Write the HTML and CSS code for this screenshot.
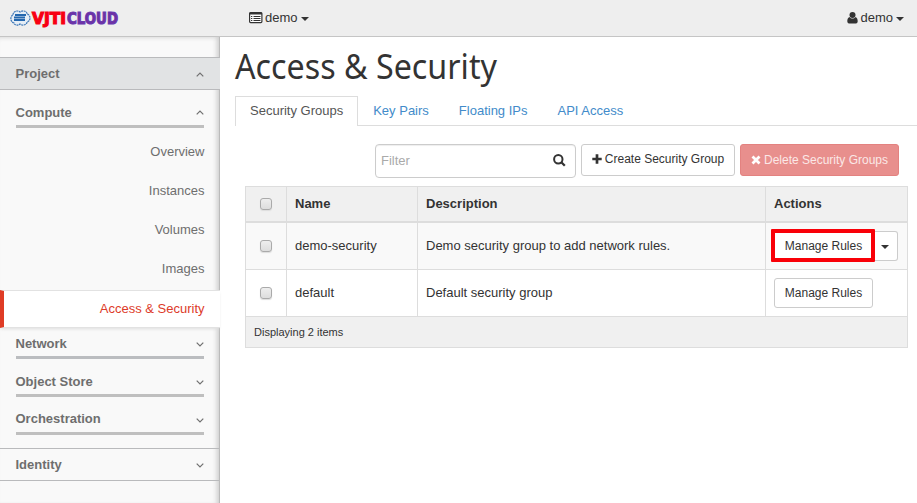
FILE: index.html
```html
<!DOCTYPE html>
<html lang="en">
<head>
<meta charset="utf-8">
<title>Access &amp; Security</title>
<link rel="stylesheet" href="styles.css">
</head>
<body>
<header class="topbar">
  <svg class="logo" width="112" height="24" viewBox="0 -2 112 24">
    <path d="M4 15C0 14 0 8 3 7C3 3 8 2 10 4C13 2 17 3 17 6C21 7 21 13 17 14C17 17 12 18 10 16C8 18 4 17 4 15Z" fill="#e5edf5" stroke="#3e78b8" stroke-width="1.2" stroke-dasharray="2 .6"/>
    <path d="M5 7H16M4 9.500H15M4 12H15" stroke="#2467ae" stroke-width="1.8"/>
    <text class="logo-red" x="22" y="15.500" textLength="34" lengthAdjust="spacingAndGlyphs">VJTI</text>
    <text class="logo-purple" x="57" y="15.500" textLength="51" lengthAdjust="spacingAndGlyphs">CLOUD</text>
  </svg>
  <div class="menu project-menu">
    <svg width="14" height="12" viewBox="0 0 14 12"><rect x=".6" y=".6" width="12.300" height="10" rx="1" fill="#fff" stroke="#333" stroke-width="1.200"/><path d="M.5 1.500H13" stroke="#333" stroke-width="2"/><path d="M2 4.500H3.300M2 6.500H3.300M2 8.500H3.300M4.500 4.500H11.500M4.500 6.500H11.500M4.500 8.500H11.500" stroke="#333"/></svg>
    <span>demo</span><i class="caret"></i>
  </div>
  <div class="menu user-menu">
    <svg width="11" height="12" viewBox="0 0 11 12"><circle cx="5.500" cy="3" r="3" fill="#333"/><path d="M2.500 5C4.200 7 6.800 7 8.500 5C10.300 5.500 10.700 7.500 10.700 9.500Q10.500 11.500 9 11.500H2Q.5 11.500.3 9.500C.3 7.500.7 5.500 2.500 5Z" fill="#333"/></svg>
    <span>demo</span><i class="caret"></i>
  </div>
</header>
<div class="layout">
  <nav class="sidebar">
    <div class="section open"><span>Project</span><svg class="chev" viewBox="0 0 8 5"><path d="M.7 4.300L4 1L7.300 4.300"/></svg></div>
    <div class="group compute"><span>Compute</span><svg class="chev" viewBox="0 0 8 5"><path d="M.7 4.300L4 1L7.300 4.300"/></svg></div>
    <a class="item">Overview</a>
    <a class="item">Instances</a>
    <a class="item">Volumes</a>
    <a class="item">Images</a>
    <a class="item active">Access &amp; Security</a>
    <div class="group network"><span>Network</span><svg class="chev" viewBox="0 0 8 5"><path d="M.7 .7L4 4L7.300 .7"/></svg></div>
    <div class="group"><span>Object Store</span><svg class="chev" viewBox="0 0 8 5"><path d="M.7 .7L4 4L7.300 .7"/></svg></div>
    <div class="group orchestration"><span>Orchestration</span><svg class="chev" viewBox="0 0 8 5"><path d="M.7 .7L4 4L7.300 .7"/></svg></div>
    <div class="section identity"><span>Identity</span><svg class="chev" viewBox="0 0 8 5"><path d="M.7 .7L4 4L7.300 .7"/></svg></div>
  </nav>
  <main class="content">
    <h1 class="title"><svg width="280" height="56"><text x="0" y="42" textLength="262" lengthAdjust="spacingAndGlyphs">Access &amp; Security</text></svg></h1>
    <div class="tabs">
      <a class="tab current">Security Groups</a>
      <a class="tab">Key Pairs</a>
      <a class="tab">Floating IPs</a>
      <a class="tab">API Access</a>
    </div>
    <div class="toolbar">
      <div class="filter"><span>Filter</span><svg width="13" height="13" viewBox="0 0 13 13" fill="none" stroke="#333"><circle cx="5.300" cy="5.300" r="4.200" stroke-width="2"/><path d="M8.300 8.300L11.800 11.800" stroke-width="2.300"/></svg></div>
      <button class="btn create"><svg width="10" height="10" viewBox="0 0 10 10"><path d="M5 .3V9.700M.3 5H9.700" stroke="#333" stroke-width="2.700"/></svg>Create Security Group</button>
      <button class="btn delete"><svg width="10" height="10" viewBox="0 0 10 10"><path d="M1.500 1.500L8.500 8.500M8.500 1.500L1.500 8.500" stroke="#fff" stroke-width="2.800"/></svg>Delete Security Groups</button>
    </div>
    <div class="table">
      <div class="row head"><div class="cell"><i class="check"></i></div><div class="cell">Name</div><div class="cell">Description</div><div class="cell">Actions</div></div>
      <div class="row striped"><div class="cell"><i class="check"></i></div><div class="cell">demo-security</div><div class="cell">Demo security group to add network rules.</div><div class="cell"><button class="btn small marked">Manage Rules</button><button class="btn toggle"><i class="caret"></i></button></div></div>
      <div class="row"><div class="cell"><i class="check"></i></div><div class="cell">default</div><div class="cell">Default security group</div><div class="cell"><button class="btn small">Manage Rules</button></div></div>
      <div class="foot">Displaying 2 items</div>
    </div>
  </main>
</div>
</body>
</html>
```
FILE: styles.css
```css
* { box-sizing: border-box; }
body { margin: 0; height: 503px; overflow: hidden; background: #fff; color: #333; font: 13px/18px "Liberation Sans", Arial, sans-serif; }
svg { display: block; flex: none; overflow: visible; }
.topbar { height: 37px; display: flex; align-items: center; background: #eee; border-bottom: 1px solid #c5c5c5; padding: 0 13px 1px 10px; }
.logo { font: 900 16px "DejaVu Sans", sans-serif; }
.logo-red { fill: #f80012; stroke: #f80012; stroke-width: 1.2px; }
.logo-purple { fill: #7030a0; stroke: #6838b0; stroke-width: 1.2px; }
.menu { display: flex; align-items: center; }
.menu span { margin: 0 3px 0 2px; }
.project-menu { margin-left: 127px; }
.user-menu { margin-left: auto; }
.caret { display: block; border: 4px solid transparent; border-top-color: #333; border-bottom: 0; margin-top: 2px; }
.layout { display: flex; height: 466px; }
.sidebar { width: 220px; flex: none; padding-top: 20px; background: #f9f9f9; border-right: 1px solid #bbb; box-shadow: inset -5px 0 5px -3px #ccc, inset 0 4px 4px -3px #ddd; color: #6e6e6e; }
.section { width: 220px; height: 33px; padding: 0 16px 0 15.5px; display: flex; align-items: center; justify-content: space-between; font-weight: bold; border-top: 1px solid #b9babc; border-bottom: 1px solid #b9babc; }
.open { background: #e1e3e4; }
.identity { margin-top: 13px; width: 219px; padding-right: 15px; }
.chev { width: 8px; height: 5px; fill: none; stroke: #707070; stroke-width: 1.2; margin-top: 2px; }
.group { height: 38px; margin: 0 15px 0 16px; border-bottom: 3px solid #bfbfbf; display: flex; align-items: center; justify-content: space-between; font-weight: bold; padding-top: 10px; }
.group span { margin-left: -.5px; }
.group .chev { margin-top: 1px; }
.compute { margin-bottom: 4px; }
.compute .chev { margin-top: 0; }
.network { height: 31px; padding-top: 3px; border-color: #bbbdc0; }
.orchestration { padding-top: 9px; }
.orchestration .chev { margin-top: 3px; }
.item { display: flex; height: 39px; padding-right: 14.5px; align-items: center; justify-content: flex-end; }
.active { width: 220px; height: 38px; padding-right: 15.5px; margin-top: 2px; border-top: 1px solid #e2e2e2; border-bottom: 1px solid #e2e2e2; border-left: 4px solid #df3c25; background: #fff; color: #dd3b29; box-shadow: 0 2px 3px -1px #ddd; }
.content { flex: 1; min-width: 0; }
.title { margin: 0; height: 59px; padding-left: 15px; font: 34px "Noto Sans", sans-serif; }
.title text { fill: #333; }
.tabs { margin-left: 15px; display: flex; height: 30px; border-bottom: 1px solid #ddd; }
.tab { height: 29px; padding: 0 15px; line-height: 29px; color: #428bca; }
.current { height: 30px; margin-bottom: -1px; padding: 0 14px; border: 1px solid #ddd; border-bottom: 0; background: #fff; color: #555; line-height: 28px; }
.toolbar { display: flex; margin: 18px 18px 8px 155px; height: 34px; }
.filter { width: 201px; height: 34px; padding: 0 9px 0 5px; border: 1px solid #ccc; border-radius: 4px; display: flex; align-items: center; justify-content: space-between; color: #aaa; box-shadow: inset 0 1px 1px #eee; }
.filter svg { margin-top: -2px; }
.btn { height: 32px; display: flex; align-items: center; justify-content: center; border: 1px solid #ccc; border-radius: 3px; background: #fff; color: #333; font: 12px "Liberation Sans", Arial, sans-serif; padding: 0; white-space: nowrap; gap: 3px; }
.create { width: 154px; margin-left: 5px; padding-bottom: 2px; }
.delete { width: 159px; margin-left: 5px; background: #e88f8d; border-color: #e38280; color: #fbe8e7; }
.table { width: 663px; height: 162px; margin-left: 25px; border: 1px solid #ddd; }
.row { display: grid; grid-template-columns: 40px 131px 348px 142px; height: 47px; border-bottom: 1px solid #ddd; }
.head { height: 36px; border-bottom-width: 2px; background: #f0f0f0; font-weight: bold; }
.striped { background: #f9f9f9; }
.cell { display: flex; align-items: center; padding-left: 8px; border-left: 1px solid #ddd; }
.cell:first-child { padding-left: 14px; border-left: 0; }
.check { width: 12px; height: 12px; border: 1px solid #aaa; border-radius: 3px; background: linear-gradient(#eee, #ddd); box-shadow: 0 1px 1px #ddd; }
.small { width: 99px; height: 30px; }
.marked { width: 104px; height: 33px; margin: 0 0 1px -3px; border: 4px solid #f90008; border-radius: 1px; padding: 1px 0 0 1px; }
.toggle { width: 23px; height: 30px; border-left: 0; border-radius: 0 3px 3px 0; padding-right: 2px; }
.foot { height: 30px; padding-left: 8px; background: #f0f0f0; font-size: 11px; line-height: 30px; }
```
